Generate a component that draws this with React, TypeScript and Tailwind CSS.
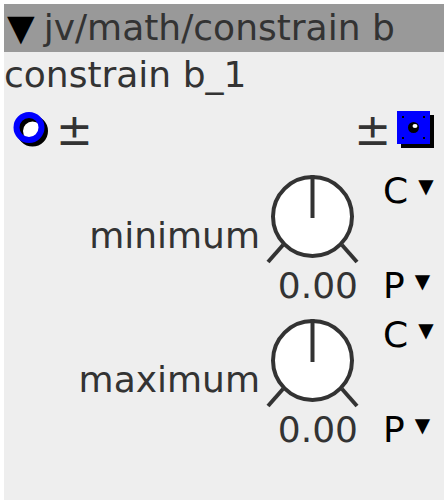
const font = { fontFamily: '"DejaVu Sans", "Liberation Sans", sans-serif' };

function Knob() {
  return (
    <svg width="100" height="100" viewBox="0 0 100 100" className="block">
      <circle cx="50.5" cy="51.5" r="39.5" fill="#ffffff" stroke="#333333" strokeWidth="4" />
      <line x1="50.5" y1="10" x2="50.5" y2="53" stroke="#333333" strokeWidth="4" />
      <line x1="21" y1="80" x2="6" y2="97" stroke="#333333" strokeWidth="4" />
      <line x1="80" y1="80" x2="95" y2="97" stroke="#333333" strokeWidth="4" />
    </svg>
  );
}

function Ring() {
  return (
    <svg width="38" height="40" viewBox="0 0 38 40" className="block">
      <circle cx="17" cy="17.5" r="10" fill="#ffffff" />
      <circle cx="20.5" cy="21" r="12.5" fill="none" stroke="#000000" strokeWidth="6" />
      <circle cx="17" cy="17.5" r="12.5" fill="none" stroke="#0000ff" strokeWidth="6" />
    </svg>
  );
}

function Port() {
  return (
    <svg width="40" height="40" viewBox="0 0 40 40" className="block">
      <rect x="5" y="5" width="33" height="33" fill="#000000" />
      <rect x="1" y="1" width="33" height="33" fill="#0000ff" />
      <rect x="6" y="6" width="2" height="2" fill="#000000" />
      <rect x="27" y="6" width="2" height="2" fill="#000000" />
      <rect x="6" y="27" width="2" height="2" fill="#000000" />
      <rect x="27" y="27" width="2" height="2" fill="#000000" />
      <circle cx="17.5" cy="17.5" r="5.5" fill="#000000" />
      <ellipse cx="19" cy="16" rx="2.5" ry="2" fill="#ffffff" />
    </svg>
  );
}

function Choice({ letter }: { letter: string }) {
  return (
    <div className="flex items-start leading-[40px] text-black">
      <span>{letter}</span>
      <span className="ml-[10px] text-[20px] leading-[30px]">▼</span>
    </div>
  );
}

function Param({ label }: { label: string }) {
  return (
    <div className="flex h-[144px] items-start">
      <div className="w-[256px] pt-[51px] text-right leading-[40px]">{label}</div>
      <div className="ml-[2px] flex w-[100px] flex-col">
        <Knob />
        <div className="mt-[1px] pr-[4px] text-right leading-[40px]">0.00</div>
      </div>
      <div className="ml-[21px] flex flex-col pt-[6px]">
        <Choice letter="C" />
        <div className="h-[55px]" />
        <Choice letter="P" />
      </div>
    </div>
  );
}

export default function App() {
  return (
    <div className="h-[504px] w-[448px] bg-white p-[4px]" style={font}>
      <div className="flex h-[496px] w-[440px] flex-col bg-[#eeeeee] text-[36px] text-[#333333]">
        <div className="flex h-[48px] items-center bg-[#999999] pl-[3px] leading-[48px]">
          <span className="text-black">▼</span>
          <span className="ml-[9px]">jv/math/constrain b</span>
        </div>
        <div className="mt-[3px] leading-[40px]">constrain b_1</div>
        <div className="flex h-[70px] items-center justify-between pl-[8px] pr-[8px]">
          <div className="flex items-center">
            <Ring />
            <span className="ml-[6px] text-[44px] leading-[50px]">±</span>
          </div>
          <div className="flex items-center">
            <span className="mr-[5px] text-[44px] leading-[50px]">±</span>
            <Port />
          </div>
        </div>
        <Param label="minimum" />
        <Param label="maximum" />
      </div>
    </div>
  );
}
